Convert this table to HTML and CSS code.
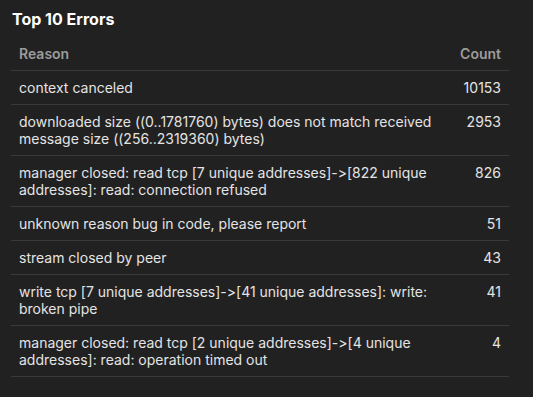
FILE: index.html
```html
<!DOCTYPE html>
<html>
<head>
<meta charset="utf-8">
<link rel="stylesheet" href="styles.css">
</head>
<body>
<div class="panel">
  <h2 class="title">Top 10 Errors</h2>
  <table class="errors">
    <thead>
      <tr><th class="reason">Reason</th><th class="count">Count</th></tr>
    </thead>
    <tbody>
      <tr><td class="reason">context canceled</td><td class="count">10153</td></tr>
      <tr><td class="reason">downloaded size ((0..1781760) bytes) does not match received message size ((256..2319360) bytes)</td><td class="count">2953</td></tr>
      <tr><td class="reason">manager closed: read tcp [7 unique addresses]-&gt;[822 unique addresses]: read: connection refused</td><td class="count">826</td></tr>
      <tr><td class="reason">unknown reason bug in code, please report</td><td class="count">51</td></tr>
      <tr><td class="reason">stream closed by peer</td><td class="count">43</td></tr>
      <tr><td class="reason">write tcp [7 unique addresses]-&gt;[41 unique addresses]: write: broken pipe</td><td class="count">41</td></tr>
      <tr><td class="reason">manager closed: read tcp [2 unique addresses]-&gt;[4 unique addresses]: read: operation timed out</td><td class="count">4</td></tr>
    </tbody>
  </table>
</div>
</body>
</html>
```
FILE: styles.css
```css
html, body {
  margin: 0;
  background: #212121;
}
body {
  font-family: Inter, "Liberation Sans", sans-serif;
  font-variant-ligatures: none;
  font-feature-settings: "calt" 0, "liga" 0;
  color: #e4e4e4;
}
.panel {
  padding: 9px 24px 0 11px;
}
.title {
  margin: 0 0 8px 1px;
  font-size: 16px;
  line-height: 20px;
  font-weight: 700;
  color: #ffffff;
}
.errors {
  width: 498px;
  border-collapse: collapse;
  font-size: 14px;
  line-height: 17px;
}
.errors th, .errors td {
  padding: 8px;
  border-bottom: 1px solid #3a3a3a;
  vertical-align: top;
}
.errors th {
  font-weight: 600;
  color: #9c9c9c;
}
.errors .reason {
  text-align: left;
}
.errors .count {
  text-align: right;
  white-space: nowrap;
}
```
